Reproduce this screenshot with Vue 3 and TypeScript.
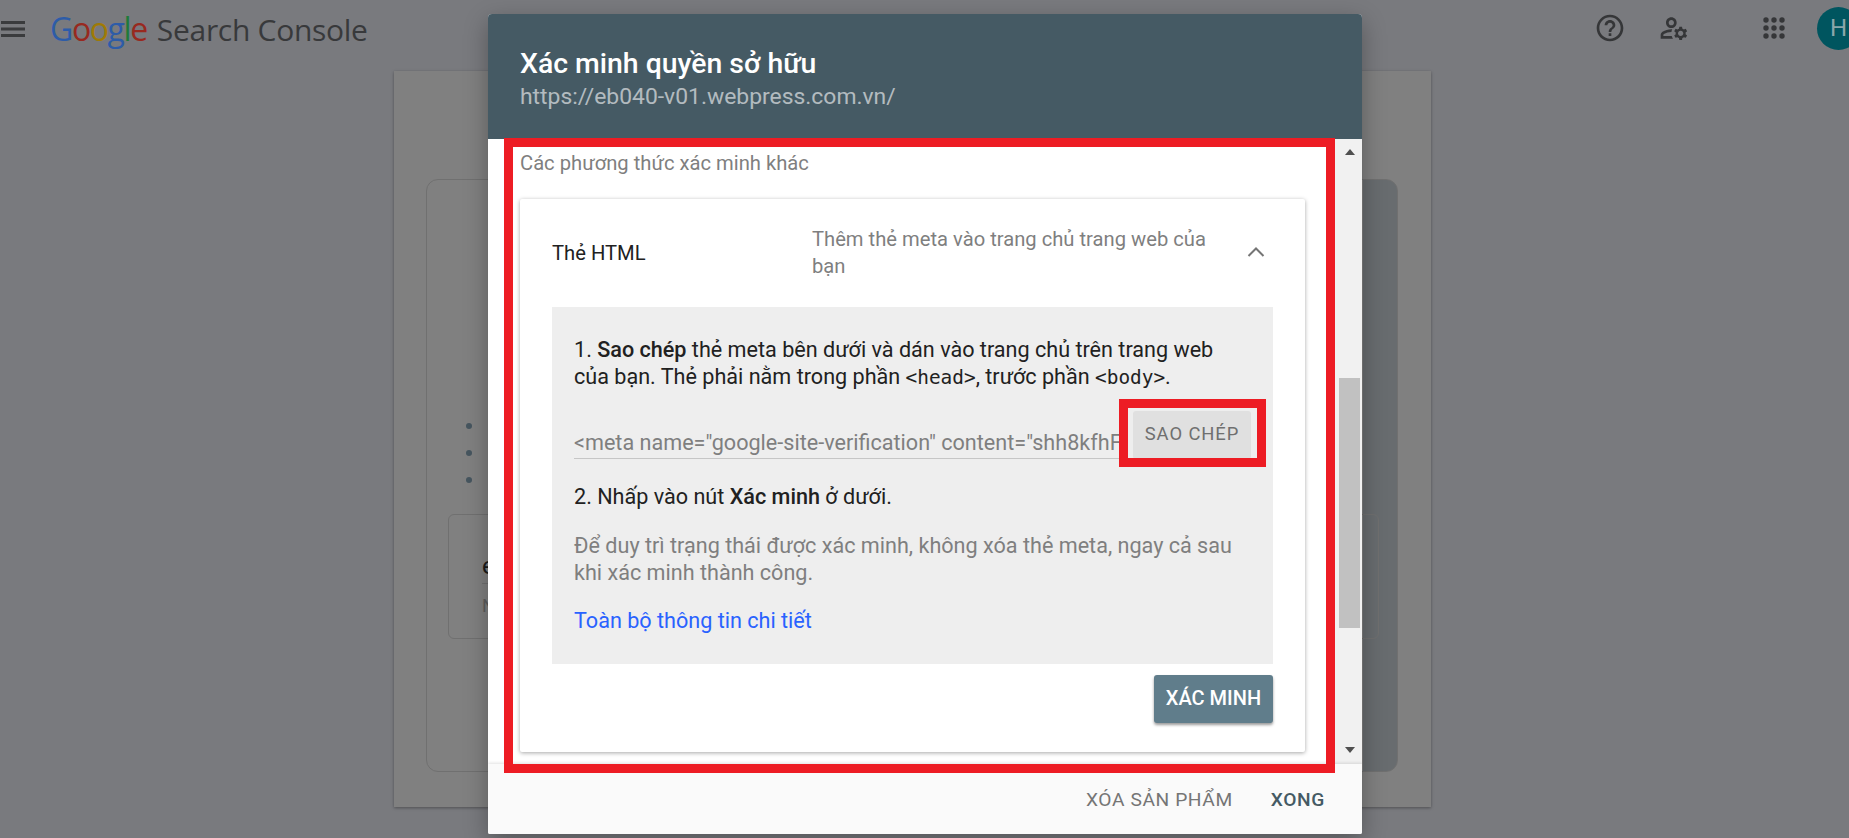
<template>
  <div class="page">
    <header class="topbar">
      <svg class="menu-icon" viewBox="0 0 24 16" aria-hidden="true">
        <path d="M0 1.5h24M0 8h24M0 14.5h24" fill="none" stroke="#3a3b3d" stroke-width="3" />
      </svg>
      <div class="logo">
        <span class="logo-google">
          <span
            v-for="(letter, i) in logoLetters"
            :key="i"
            :style="{ color: letter.color }"
          >{{ letter.char }}</span>
        </span>
        <span class="logo-product">Search Console</span>
      </div>
      <div class="topbar-actions">
        <svg class="action-icon" viewBox="0 0 24 24" aria-hidden="true">
          <path d="M11 18h2v-2h-2v2zm1-16C6.48 2 2 6.48 2 12s4.48 10 10 10 10-4.48 10-10S17.52 2 12 2zm0 18c-4.41 0-8-3.59-8-8s3.59-8 8-8 8 3.59 8 8-3.59 8-8 8zm0-14c-2.21 0-4 1.79-4 4h2c0-1.1.9-2 2-2s2 .9 2 2c0 2-3 1.75-3 5h2c0-2.25 3-2.5 3-5 0-2.21-1.79-4-4-4z" />
        </svg>
        <svg class="action-icon account-icon" viewBox="0 0 24 24" aria-hidden="true">
          <path d="M4,18v-0.65c0-0.34,0.16-0.66,0.41-0.81C6.1,15.53,8.03,15,10,15c0.03,0,0.05,0,0.08,0.01c0.1-0.7,0.3-1.37,0.59-1.98C10.45,13.01,10.23,13,10,13c-2.42,0-4.68,0.67-6.61,1.82C2.51,15.34,2,16.32,2,17.35V20h9.26c-0.42-0.6-0.75-1.28-0.97-2H4z M10,12c2.21,0,4-1.79,4-4s-1.79-4-4-4C7.79,4,6,5.79,6,8S7.79,12,10,12z M10,6c1.1,0,2,0.9,2,2s-0.9,2-2,2c-1.1,0-2-0.9-2-2S8.9,6,10,6z M20.75,16c0-0.22-0.03-0.42-0.06-0.63l1.14-1.01l-1-1.73l-1.45,0.49c-0.32-0.27-0.68-0.48-1.08-0.63L18,11h-2l-0.3,1.49c-0.4,0.15-0.76,0.36-1.08,0.63l-1.45-0.49l-1,1.73l1.14,1.01c-0.03,0.21-0.06,0.41-0.06,0.63s0.03,0.42,0.06,0.63l-1.14,1.01l1,1.73l1.45-0.49c0.32,0.27,0.68,0.48,1.08,0.63L16,21h2l0.3-1.49c0.4-0.15,0.76-0.36,1.08-0.63l1.45,0.49l1-1.73l-1.14-1.01C20.72,16.42,20.75,16.22,20.75,16z M17,18c-1.1,0-2-0.9-2-2s0.9-2,2-2s2,0.9,2,2S18.1,18,17,18z" />
        </svg>
        <svg class="apps-icon" viewBox="0 0 22 22" aria-hidden="true">
          <template v-for="y in dotRows" :key="y">
            <circle v-for="x in dotRows" :key="x" :cx="x" :cy="y" r="2.7" />
          </template>
        </svg>
        <div class="avatar">H</div>
      </div>
    </header>

    <main class="sheet">
      <section class="sheet-card">
        <ul class="sheet-list">
          <li v-for="n in 3" :key="n"></li>
        </ul>
        <div class="property-box">
          <div class="property-name">e</div>
          <div class="property-note">N</div>
        </div>
      </section>
    </main>

    <div class="dialog">
      <div class="dialog-head">
        <h1>Xác minh quyền sở hữu</h1>
        <p>https://eb040-v01.webpress.com.vn/</p>
      </div>

      <div class="dialog-main">
        <div class="dialog-body">
          <div class="other-label">Các phương thức xác minh khác</div>
          <div class="method-card">
            <div class="method-head">
              <div class="method-name">Thẻ HTML</div>
              <div class="method-desc">Thêm thẻ meta vào trang chủ trang web của bạn</div>
              <svg class="chevron" viewBox="0 0 18 11" aria-hidden="true">
                <path d="M1.5 10 9 2.5 16.5 10" fill="none" stroke="#757575" stroke-width="2" />
              </svg>
            </div>

            <div class="method-panel">
              <p class="step">
                1. <b>Sao chép</b> thẻ meta bên dưới và dán vào trang chủ trên trang web của bạn.
                Thẻ phải nằm trong phần <code>&lt;head&gt;</code>, trước phần <code>&lt;body&gt;</code>.
              </p>
              <div class="copy-row">
                <div class="meta-field">{{ metaTag }}</div>
                <button class="copy-btn" type="button">SAO CHÉP</button>
              </div>
              <p class="step step-two">2. Nhấp vào nút <b>Xác minh</b> ở dưới.</p>
              <p class="note">Để duy trì trạng thái được xác minh, không xóa thẻ meta, ngay cả sau khi xác minh thành công.</p>
              <a class="details-link" href="#">Toàn bộ thông tin chi tiết</a>
            </div>

            <div class="method-actions">
              <button class="verify-btn" type="button">XÁC MINH</button>
            </div>
          </div>
        </div>

        <div class="scrollbar">
          <span class="arrow arrow-up"></span>
          <div class="scroll-track"><div class="scroll-thumb"></div></div>
          <span class="arrow arrow-down"></span>
        </div>
      </div>

      <div class="dialog-foot">
        <button class="foot-btn" type="button">XÓA SẢN PHẨM</button>
        <button class="foot-btn foot-primary" type="button">XONG</button>
      </div>
    </div>

    <!-- red marks drawn over the screenshot -->
    <div class="mark mark-body"></div>
    <div class="mark mark-copy"></div>
  </div>
</template>

<script setup lang="ts">
const logoLetters = [
  { char: 'G', color: '#2d5ca8' },
  { char: 'o', color: '#98291f' },
  { char: 'o', color: '#a07a05' },
  { char: 'g', color: '#2d5ca8' },
  { char: 'l', color: '#1f7a3a' },
  { char: 'e', color: '#98291f' },
]

const dotRows = [3, 11, 19]

const metaTag = '<meta name="google-site-verification" content="shh8kfhFqT3vXw0Lm2" />'
</script>

<style>
html,
body {
  margin: 0;
  overflow: hidden;
}
</style>

<style scoped>
.page {
  position: relative;
  width: 1849px;
  height: 838px;
  overflow: hidden;
  background: #797a7e;
  font-family: Roboto, "Noto Sans", sans-serif;
}

.topbar {
  display: flex;
  align-items: center;
  height: 56px;
  margin-bottom: 15px;
}

.menu-icon {
  width: 24px;
  height: 16px;
  margin-left: 1px;
  margin-top: 1px;
  flex: none;
}

.logo {
  display: flex;
  align-items: baseline;
  margin-left: 25px;
  font-family: "Open Sans", sans-serif;
}

.logo-google {
  font-size: 32px;
  letter-spacing: -1.4px;
}

.logo-product {
  margin-left: 10px;
  font-size: 30px;
  letter-spacing: -0.3px;
  color: #38393b;
}

.topbar-actions {
  display: flex;
  align-items: center;
  margin-left: auto;
  margin-right: -11px;
}

.action-icon {
  width: 32px;
  height: 32px;
  fill: #353638;
}

.account-icon {
  margin-left: 32px;
}

.apps-icon {
  width: 22px;
  height: 22px;
  margin-left: 73px;
  fill: #353638;
}

.avatar {
  width: 43px;
  height: 43px;
  margin-left: 32px;
  border-radius: 50%;
  background: #00555f;
  color: #8aa6aa;
  font-size: 24px;
  line-height: 43px;
  text-align: center;
}

.sheet {
  box-sizing: border-box;
  width: 1037px;
  height: 736px;
  margin-left: 394px;
  padding: 108px 33px 35px 32px;
  background: #808080;
  box-shadow: 0 1px 3px rgba(0, 0, 0, 0.35);
}

.sheet-card {
  position: relative;
  box-sizing: border-box;
  height: 593px;
  padding: 243px 18px 0 21px;
  border: 1px solid #707070;
  border-radius: 12px;
  background: linear-gradient(to right, #808080 936px, #686c6f 936px);
}

.sheet-list {
  display: flex;
  flex-direction: column;
  gap: 21px;
  margin: 0;
  padding: 0 0 0 18px;
  list-style: none;
}

.sheet-list li {
  width: 6px;
  height: 6px;
  border-radius: 50%;
  background: #46555f;
}

.property-box {
  box-sizing: border-box;
  height: 125px;
  margin-top: 31px;
  padding: 35px 33px 0;
  border: 1px solid #707070;
  border-radius: 6px;
}

.property-name {
  font-size: 24px;
  line-height: 32px;
  color: #1a1a1a;
  border-bottom: 1px solid #707070;
  padding-bottom: 1px;
}

.property-note {
  margin-top: 11px;
  font-size: 18px;
  color: #5d5d5d;
}

.dialog {
  position: absolute;
  top: 14px;
  left: 488px;
  display: flex;
  flex-direction: column;
  width: 874px;
  height: 820px;
  overflow: hidden;
  border-radius: 4px 4px 2px 2px;
  background: #fff;
  box-shadow: 0 8px 24px rgba(0, 0, 0, 0.3);
}

.dialog-head {
  box-sizing: border-box;
  height: 125px;
  padding: 34px 32px 0;
  background: #455a64;
  color: #fff;
}

.dialog-head h1 {
  margin: 0;
  font-size: 28.4px;
  font-weight: 500;
  line-height: 32px;
}

.dialog-head p {
  margin: 2px 0 0;
  font-size: 22.9px;
  line-height: 30px;
  color: rgba(255, 255, 255, 0.6);
}

.dialog-main {
  display: flex;
  flex: 1;
  min-height: 0;
}

.dialog-body {
  flex: 1;
  min-width: 0;
  padding: 11px 30px 0 32px;
}

.other-label {
  height: 49px;
  font-size: 20.2px;
  line-height: 27px;
  color: #7f7f7f;
}

.method-card {
  box-sizing: border-box;
  height: 553px;
  padding: 0 32px;
  border-radius: 2px;
  background: #fff;
  box-shadow: 0 1px 4px rgba(0, 0, 0, 0.35);
}

.method-head {
  display: flex;
  align-items: center;
  height: 108px;
  box-sizing: border-box;
}

.method-name {
  flex: none;
  width: 260px;
  font-size: 20.2px;
  line-height: 27px;
  color: #212121;
}

.method-desc {
  flex: 1;
  font-size: 20.2px;
  line-height: 27px;
  color: #7f7f7f;
}

.chevron {
  flex: none;
  width: 18px;
  height: 11px;
  margin: 0 8px 4px 30px;
}

.method-panel {
  box-sizing: border-box;
  height: 357px;
  padding: 29px 22px 0;
  background: #eee;
}

.step {
  margin: 0;
  font-size: 21.6px;
  line-height: 27px;
  color: #212121;
}

.step b,
.foot-primary {
  font-weight: 500;
}

.step code {
  font-family: "DejaVu Sans Mono", monospace;
  font-size: 19.4px;
}

.copy-row {
  display: flex;
  align-items: flex-end;
  height: 48px;
  margin-top: 20px;
}

.meta-field {
  flex: 1;
  min-width: 0;
  height: 30px;
  overflow: hidden;
  white-space: nowrap;
  border-bottom: 1px solid #c6c6c6;
  font-size: 21.6px;
  line-height: 30px;
  color: #7f7f7f;
}

.copy-btn {
  flex: none;
  width: 118px;
  height: 48px;
  margin-left: 13px;
  padding: 0 0 3px;
  border: 0;
  border-radius: 3px;
  background: #e0e0e0;
  font-family: inherit;
  font-size: 18.4px;
  letter-spacing: 0.9px;
  color: #6f6f6f;
}

.step-two {
  margin-top: 24px;
}

.note {
  margin: 22px 0 0;
  font-size: 21.6px;
  line-height: 27px;
  color: #7f7f7f;
}

.details-link {
  display: block;
  margin-top: 21px;
  font-size: 21.6px;
  line-height: 27px;
  color: #2962ff;
  text-decoration: none;
}

.method-actions {
  display: flex;
  justify-content: flex-end;
  padding-top: 11px;
}

.verify-btn {
  width: 119px;
  height: 48px;
  padding: 0 0 3px;
  border: 0;
  border-radius: 3px;
  background: #607d8b;
  box-shadow: 0 2px 3px rgba(0, 0, 0, 0.4);
  font-family: inherit;
  font-size: 20px;
  font-weight: 500;
  color: #fff;
}

.scrollbar {
  display: flex;
  flex-direction: column;
  align-items: center;
  flex: none;
  width: 27px;
  box-sizing: border-box;
  padding: 10px 2px 11px 4px;
  background: #f1f1f1;
}

.scroll-track {
  flex: 1;
  width: 100%;
  padding-top: 223px;
  box-sizing: border-box;
}

.scroll-thumb {
  height: 250px;
  background: #c1c1c1;
}

.arrow {
  width: 0;
  height: 0;
  border-left: 5.5px solid transparent;
  border-right: 5.5px solid transparent;
}

.arrow-up {
  border-bottom: 6px solid #505050;
}

.arrow-down {
  border-top: 6px solid #505050;
}

.dialog-foot {
  display: flex;
  align-items: center;
  justify-content: flex-end;
  gap: 38px;
  box-sizing: border-box;
  height: 70px;
  padding: 0 37px 0 0;
  background: #fafafa;
  box-shadow: 0 -1px 3px rgba(0, 0, 0, 0.12);
  position: relative;
}

.foot-btn {
  padding: 0;
  border: 0;
  background: none;
  font-family: inherit;
  font-size: 19.2px;
  letter-spacing: 0.6px;
  color: #757575;
}

.foot-primary {
  color: #455a64;
}

.mark {
  position: absolute;
  box-sizing: border-box;
  border: 9px solid #ed1c24;
  pointer-events: none;
}

.mark-body {
  top: 138px;
  left: 504px;
  width: 831px;
  height: 635px;
}

.mark-copy {
  top: 399px;
  left: 1119px;
  width: 147px;
  height: 68px;
}
</style>
